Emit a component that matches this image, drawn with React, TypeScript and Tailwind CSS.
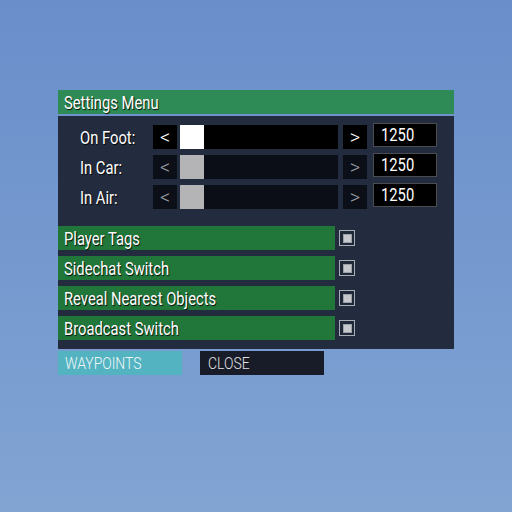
import React from "react";

const font = { fontFamily: '"Roboto", "Liberation Sans", sans-serif' };

type Slider = { label: string; active: boolean; value: number };

const sliders: Slider[] = [
  { label: "On Foot:", active: true, value: 1250 },
  { label: "In Car:", active: false, value: 1250 },
  { label: "In Air:", active: false, value: 1250 },
];

const toggles = ["Player Tags", "Sidechat Switch", "Reveal Nearest Objects", "Broadcast Switch"];

// condensed look: squeeze the text horizontally
function Narrow({ children }: { children: React.ReactNode }) {
  return <span className="inline-block origin-left scale-x-[0.82] whitespace-nowrap">{children}</span>;
}

function SliderRow({ s }: { s: Slider }) {
  const btn = s.active ? "bg-black text-white" : "bg-[#0c0f17] text-[#9a9ea6]";
  return (
    <div className="flex h-[24px] items-center">
      <div className="w-[95px] pl-[22px] pt-[1px] text-[18px] leading-none text-white [text-shadow:1px_1px_1px_rgba(0,0,0,0.9)]">
        <Narrow>{s.label}</Narrow>
      </div>
      <div className={`flex h-[24px] w-[24px] items-center justify-center text-[20px] font-light leading-none ${btn}`}>
        &lt;
      </div>
      <div className={`ml-[3px] flex h-[24px] w-[158px] ${s.active ? "bg-black" : "bg-[#0b0e16]"}`}>
        <div className={`h-full w-[24px] ${s.active ? "bg-white" : "bg-[#b4b4b6]"}`} />
      </div>
      <div className={`ml-[5px] flex h-[24px] w-[24px] items-center justify-center text-[20px] font-light leading-none ${btn}`}>
        &gt;
      </div>
      <div className="ml-[6px] -mt-[4px] flex h-[24px] w-[64px] items-center border border-[#4a4c50] bg-black pl-[7px] text-[18px] leading-none text-white">
        <Narrow>{s.value}</Narrow>
      </div>
    </div>
  );
}

function ToggleRow({ label }: { label: string }) {
  return (
    <div className="flex h-[24px] items-center">
      <div className="flex h-[24px] w-[277px] items-center bg-[#21773a] pl-[6px] pt-[2px] text-[18px] leading-none text-white [text-shadow:1px_1px_1px_rgba(0,0,0,0.9)]">
        <Narrow>{label}</Narrow>
      </div>
      <div className="ml-[4px] flex h-[16px] w-[16px] items-center justify-center border-[1.5px] border-[#a8adb4] bg-[#1f2838]">
        <div className="h-[9px] w-[9px] border border-[#9aa0a8] bg-[#c6c8cc]" />
      </div>
    </div>
  );
}

export default function App() {
  return (
    <div
      className="h-[512px] w-[512px] bg-gradient-to-b from-[#698eca] to-[#81a4d3] pl-[58px] pt-[90px]"
      style={font}
    >
      <div className="w-[396px]">
        <div className="flex h-[24px] items-center bg-[#2e8b55] pl-[6px] pt-[1px] text-[18px] leading-none text-white [text-shadow:1px_1px_1px_rgba(0,0,0,0.9)]">
          <Narrow>Settings Menu</Narrow>
        </div>
        <div className="mt-[2px] bg-[#222c3e] pb-[9px] pt-[9px]">
          <div className="flex flex-col gap-[6px]">
            {sliders.map((s) => (
              <SliderRow key={s.label} s={s} />
            ))}
          </div>
          <div className="mt-[17px] flex flex-col gap-[6px]">
            {toggles.map((t) => (
              <ToggleRow key={t} label={t} />
            ))}
          </div>
        </div>
        <div className="mt-[2px] flex gap-[18px]">
          <div className="flex h-[24px] w-[124px] items-center bg-[#53b3c1] pl-[7px] pt-[1px] text-[17px] font-light leading-none text-[#f2f8fa]">
            <Narrow>WAYPOINTS</Narrow>
          </div>
          <div className="flex h-[24px] w-[124px] items-center bg-[#171c28] pl-[8px] pt-[1px] text-[17px] font-light leading-none text-[#e2e3e6]">
            <Narrow>CLOSE</Narrow>
          </div>
        </div>
      </div>
    </div>
  );
}
